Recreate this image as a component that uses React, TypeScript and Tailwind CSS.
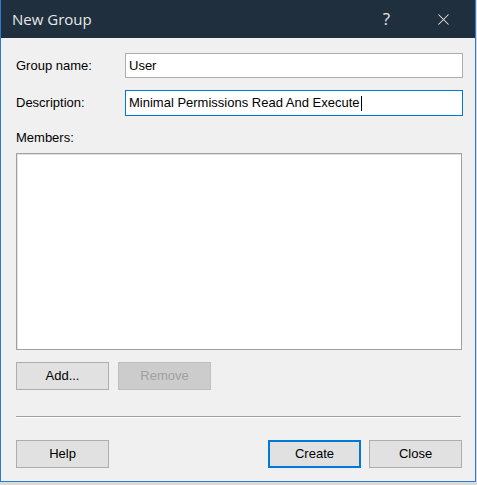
import { X } from "lucide-react";

function WinButton({ label, disabled, primary }: { label: string; disabled?: boolean; primary?: boolean }) {
  return (
    <div
      className={`flex h-[28px] w-[93px] shrink-0 items-center justify-center border text-[13px] ${
        disabled
          ? "border-[#bfbfbf] bg-[#cccccc] text-[#a0a0a0]"
          : primary
          ? "border-[#0078d7] bg-[#e1e1e1] text-black shadow-[inset_0_0_0_1px_#0078d7]"
          : "border-[#adadad] bg-[#e1e1e1] text-black"
      }`}
    >
      {label}
    </div>
  );
}

export default function App() {
  return (
    <div className="h-[485px] w-[477px] bg-[#dadada] font-['Liberation_Sans',Arial,sans-serif]">
      <div className="flex h-[482px] w-[476px] flex-col border border-t-0 border-[#2b7bd0] bg-[#f0f0f0]">
        {/* Title bar */}
        <div className="flex h-[38px] items-center bg-[#1f2f3d] pl-[11px] text-[#e8e8e8]">
          <span className="font-['Open_Sans','Noto_Sans',sans-serif] text-[15px]">New Group</span>
          <span className="ml-auto mr-[44px] font-['Open_Sans','Noto_Sans',sans-serif] text-[17px]">?</span>
          <X size={19} strokeWidth={1.3} className="mr-[22px]" />
        </div>

        {/* Body */}
        <div className="flex flex-1 flex-col pl-[15px] pr-[10px] pt-[15px] text-[13px] text-black">
          <div className="flex items-center">
            <span className="w-[109px] shrink-0">Group name:</span>
            <div className="flex h-[25px] w-[338px] shrink-0 items-center border border-[#adadad] bg-white px-[3px]">User</div>
          </div>
          <div className="mt-[12px] flex items-center">
            <span className="w-[109px] shrink-0">Description:</span>
            <div className="flex h-[26px] w-[338px] shrink-0 items-center border border-[#0078d7] bg-white px-[3px]">
              Minimal Permissions Read And Execute
              <span className="ml-px h-[15px] w-px bg-black" />
            </div>
          </div>

          <div className="mt-[14px] leading-[16px]">Members:</div>
          <div className="mt-[7px] h-[197px] w-[446px] shrink-0 border border-[#a0a0a0] bg-white shadow-[inset_1px_1px_0_#e3e3e3]" />

          <div className="mt-[12px] flex gap-[9px]">
            <WinButton label="Add..." />
            <WinButton label="Remove" disabled />
          </div>

          <div className="mt-[26px] h-[2px] w-[445px] border-t border-[#a0a0a0] bg-white" />

          <div className="mt-[22px] flex w-[446px]">
            <WinButton label="Help" />
            <div className="ml-auto flex gap-[8px]">
              <WinButton label="Create" primary />
              <WinButton label="Close" />
            </div>
          </div>
        </div>
      </div>
    </div>
  );
}
